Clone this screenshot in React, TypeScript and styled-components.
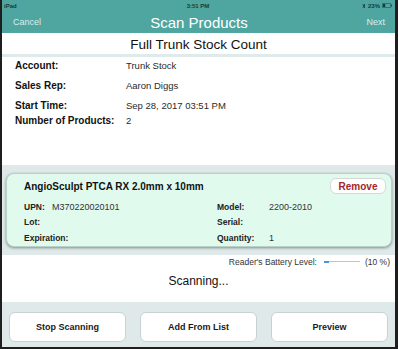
import React from "react";
import styled, { createGlobalStyle } from "styled-components";

const GlobalStyle = createGlobalStyle`
  html, body { margin: 0; padding: 0; background: #1e1e1e; }
  body { font-family: "Liberation Sans", Arial, sans-serif; }
  * { box-sizing: border-box; }
`;

const Frame = styled.div`
  width: 398px;
  height: 349px;
  padding: 0 3px 2px 2px;
  background: #1e1e1e;
`;

const Screen = styled.div`
  width: 393px;
  height: 347px;
  display: flex;
  flex-direction: column;
  background: #fff;
  overflow: hidden;
`;

const StatusBar = styled.div`
  height: 11px;
  background: #4fa6a1;
  display: grid;
  grid-template-columns: 1fr auto 1fr;
  align-items: center;
  padding: 0 3px 0 2px;
  font-size: 6px;
  font-weight: 700;
  color: #173b38;
`;

const StatusRight = styled.div`
  display: flex;
  justify-content: flex-end;
  align-items: center;
  gap: 2px;
`;

const NavBar = styled.div`
  height: 22px;
  background: #4fa6a1;
  display: grid;
  grid-template-columns: 1fr auto 1fr;
  align-items: center;
  padding: 0 10px 0 11px;
`;

const NavButton = styled.span<{ $right?: boolean }>`
  font-size: 9px;
  color: #d9efed;
  justify-self: ${(p) => (p.$right ? "end" : "start")};
`;

const NavTitle = styled.span`
  font-size: 15px;
  color: #fff;
`;

const TitleBar = styled.div`
  height: 21px;
  display: flex;
  align-items: center;
  justify-content: center;
  font-size: 13.5px;
  color: #111;
  padding-top: 2px;
`;

const Separator = styled.div`
  height: 3px;
  background: #dfeaea;
`;

const Info = styled.div`
  height: 108px;
  display: flex;
  flex-direction: column;
  padding: 0 0 0 13px;
`;

const InfoRow = styled.div<{ $gap: number }>`
  display: grid;
  grid-template-columns: 111px 1fr;
  height: 12px;
  align-items: center;
  margin-top: ${(p) => p.$gap}px;
`;

const InfoLabel = styled.span`
  font-size: 10px;
  font-weight: 700;
  color: #111;
  white-space: nowrap;
`;

const InfoValue = styled.span`
  font-size: 9.5px;
  color: #2a2a2a;
  white-space: nowrap;
`;

const GraySection = styled.div`
  height: 90px;
  background: #dfe9ea;
  padding: 8px 3px 0 4px;
`;

const Card = styled.div`
  height: 74px;
  background: #e0fbee;
  border: 1px solid #b8d3c6;
  border-radius: 8px;
  box-shadow: 0 1px 3px rgba(0, 0, 0, 0.4);
  padding: 3px 5px 0 17px;
  display: flex;
  flex-direction: column;
`;

const CardHeader = styled.div`
  display: flex;
  align-items: center;
  justify-content: space-between;
  height: 18px;
`;

const CardTitle = styled.span`
  font-size: 10px;
  font-weight: 700;
  color: #111;
`;

const RemoveButton = styled.button`
  width: 56px;
  height: 16px;
  background: #fff;
  border: 1px solid #d4d9d6;
  border-radius: 6px;
  font-family: inherit;
  font-size: 10px;
  font-weight: 700;
  color: #a3262a;
  padding: 0;
`;

const Details = styled.div`
  display: grid;
  grid-template-columns: 28px 165px 52px 1fr;
  grid-auto-rows: 15.5px;
  align-items: center;
  margin-top: 4px;
`;

const DLabel = styled.span`
  font-size: 8.5px;
  font-weight: 700;
  color: #222;
  white-space: nowrap;
`;

const DValue = styled.span`
  font-size: 9px;
  color: #333;
  white-space: nowrap;
`;

const Status = styled.div`
  height: 47px;
  display: flex;
  flex-direction: column;
`;

const BatteryRow = styled.div`
  height: 13px;
  display: flex;
  justify-content: flex-end;
  align-items: center;
  padding-right: 5px;
  font-size: 8.5px;
  color: #333;
`;

const Slider = styled.div`
  width: 36px;
  height: 1px;
  background: #b9c8cf;
  margin: 0 5px 0 7px;
`;

const SliderFill = styled.div`
  height: 2px;
  margin-top: -0.5px;
  background: #4d95db;
`;

const Scanning = styled.div`
  height: 22px;
  display: flex;
  align-items: center;
  justify-content: center;
  font-size: 12px;
  color: #111;
  margin-top: 2px;
`;

const Footer = styled.div`
  flex: 1;
  background: #dfe9ea;
  padding: 10px 7px 0 7px;
  display: flex;
  gap: 14px;
`;

const FooterButton = styled.button`
  flex: 1;
  height: 30px;
  background: #fff;
  border: 1px solid #c8d2d2;
  border-radius: 6px;
  font-family: inherit;
  font-size: 9px;
  font-weight: 700;
  color: #1a1a1a;
  padding: 0;
`;

const details: [string, string, string, string][] = [
  ["UPN:", "M370220020101", "Model:", "2200-2010"],
  ["Lot:", "", "Serial:", ""],
  ["Expiration:", "", "Quantity:", "1"],
];

const info: [string, string, number][] = [
  ["Account:", "Trunk Stock", 2],
  ["Sales Rep:", "Aaron Diggs", 8],
  ["Start Time:", "Sep 28, 2017 03:51 PM", 8],
  ["Number of Products:", "2", 3],
];

export default function App() {
  const battery = 10;
  return (
    <>
      <GlobalStyle />
      <Frame>
        <Screen>
          <StatusBar>
            <span>iPad</span>
            <span>3:51 PM</span>
            <StatusRight>
              <svg width="4" height="6" viewBox="0 0 4 6">
                <path d="M0.5 1.5 L3 4 L2 5 V1 L3 2 L0.5 4.5" fill="none" stroke="#173b38" strokeWidth="0.7" />
              </svg>
              <span>23%</span>
              <svg width="10" height="5" viewBox="0 0 10 5">
                <rect x="0.3" y="0.3" width="8.4" height="4.4" rx="1" fill="none" stroke="#173b38" strokeWidth="0.6" />
                <rect x="1" y="1" width="2.2" height="3" fill="#173b38" />
                <rect x="9" y="1.6" width="0.8" height="1.8" fill="#173b38" />
              </svg>
            </StatusRight>
          </StatusBar>
          <NavBar>
            <NavButton>Cancel</NavButton>
            <NavTitle>Scan Products</NavTitle>
            <NavButton $right>Next</NavButton>
          </NavBar>
          <TitleBar>Full Trunk Stock Count</TitleBar>
          <Separator />
          <Info>
            {info.map(([l, v, g]) => (
              <InfoRow key={l} $gap={g}>
                <InfoLabel>{l}</InfoLabel>
                <InfoValue>{v}</InfoValue>
              </InfoRow>
            ))}
          </Info>
          <GraySection>
            <Card>
              <CardHeader>
                <CardTitle>AngioSculpt PTCA RX 2.0mm x 10mm</CardTitle>
                <RemoveButton>Remove</RemoveButton>
              </CardHeader>
              <Details>
                {details.map((r) => (
                  <React.Fragment key={r[0]}>
                    <DLabel>{r[0]}</DLabel>
                    <DValue>{r[1]}</DValue>
                    <DLabel>{r[2]}</DLabel>
                    <DValue>{r[3]}</DValue>
                  </React.Fragment>
                ))}
              </Details>
            </Card>
          </GraySection>
          <Status>
            <BatteryRow>
              <span>Reader's Battery Level:</span>
              <Slider>
                <SliderFill style={{ width: `${(battery / 100) * 36 + 1}px` }} />
              </Slider>
              <span>(10 %)</span>
            </BatteryRow>
            <Scanning>Scanning...</Scanning>
          </Status>
          <Footer>
            <FooterButton>Stop Scanning</FooterButton>
            <FooterButton>Add From List</FooterButton>
            <FooterButton>Preview</FooterButton>
          </Footer>
        </Screen>
      </Frame>
    </>
  );
}
